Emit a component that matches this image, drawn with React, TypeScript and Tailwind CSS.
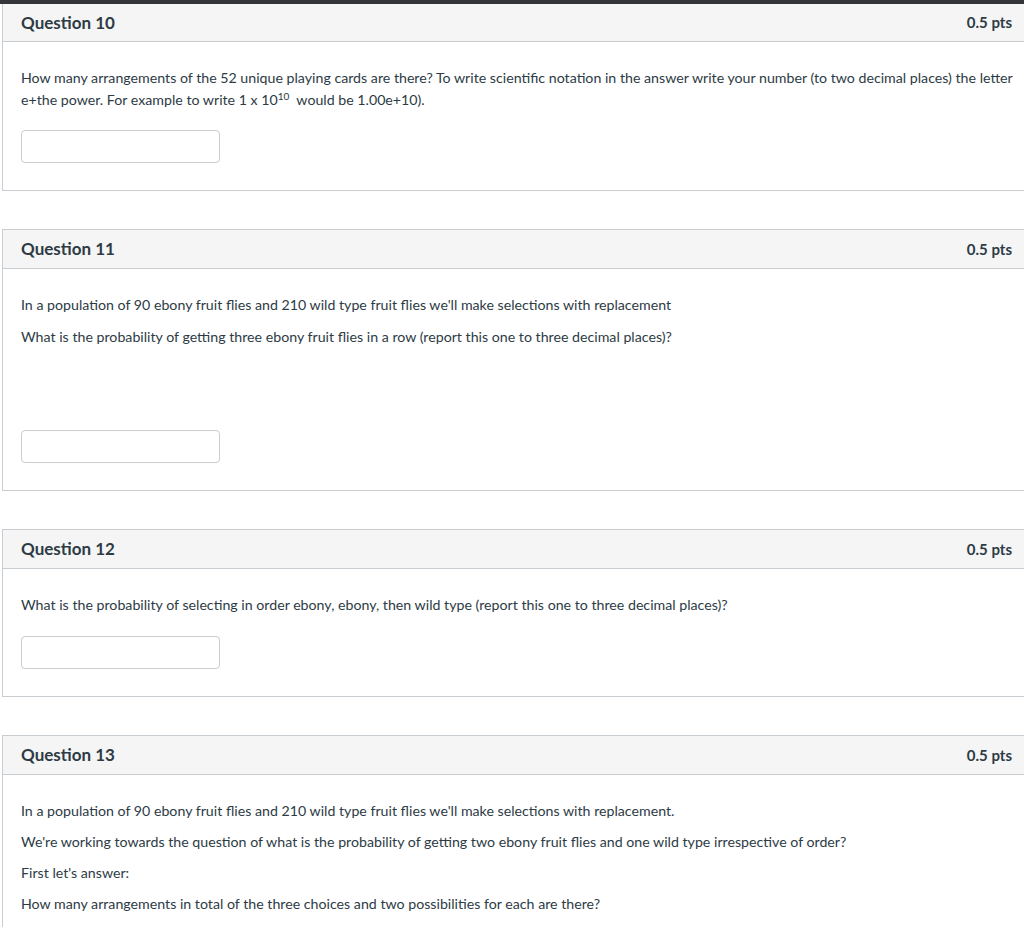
import React from "react";

const font = { fontFamily: "Lato, 'Open Sans', sans-serif" };

function AnswerBox() {
  return <div className="w-[199px] h-[33px] rounded-[4px] border border-[#c7cdd1] bg-white" />;
}

function QuestionCard({
  n,
  children,
  first,
  last,
}: {
  n: number;
  children: React.ReactNode;
  first?: boolean;
  last?: boolean;
}) {
  return (
    <div
      className={`ml-[2px] border-l border-b border-[#c7cdd1] bg-white ${first ? "" : "border-t"} ${
        last ? "" : "mb-[38px]"
      }`}
    >
      <div
        className={`${
          first ? "h-[38px]" : "h-[39px]"
        } flex items-center justify-between bg-[#f5f5f5] border-b border-[#c7cdd1] pl-[18px] pr-[12px]`}
      >
        <span className="text-[17px] font-bold text-[#2d3b45]">Question {n}</span>
        <span className="text-[15px] font-bold text-[#2d3b45]">0.5 pts</span>
      </div>
      <div className="pl-[18px] pr-[10px] pt-[25px] pb-[27px] text-[14.2px] leading-[22px] text-[#2d3b45]">
        {children}
      </div>
    </div>
  );
}

export default function App() {
  return (
    <div className="w-[1024px] h-[927px] overflow-hidden bg-white" style={font}>
      <div className="h-[4px] bg-[#333539]" />
      <QuestionCard n={10} first>
        <p>
          How many arrangements of the 52 unique playing cards are there? To write scientific notation in the answer write
          your number (to two decimal places) the letter e+the power. For example to write 1 x 10
          <sup className="text-[10px] leading-none">10</sup>&nbsp; would be 1.00e+10).
        </p>
        <div className="mt-[19px]">
          <AnswerBox />
        </div>
      </QuestionCard>
      <QuestionCard n={11}>
        <p>In a population of 90 ebony fruit flies and 210 wild type fruit flies we'll make selections with replacement</p>
        <p className="mt-[10px]">
          What is the probability of getting three ebony fruit flies in a row (report this one to three decimal places)?
        </p>
        <div className="mt-[82px]">
          <AnswerBox />
        </div>
      </QuestionCard>
      <QuestionCard n={12}>
        <p>What is the probability of selecting in order ebony, ebony, then wild type (report this one to three decimal places)?</p>
        <div className="mt-[20px]">
          <AnswerBox />
        </div>
      </QuestionCard>
      <QuestionCard n={13} last>
        <p>In a population of 90 ebony fruit flies and 210 wild type fruit flies we'll make selections with replacement.</p>
        <p className="mt-[9px]">
          We're working towards the question of what is the probability of getting two ebony fruit flies and one wild type
          irrespective of order?
        </p>
        <p className="mt-[9px]">First let's answer:</p>
        <p className="mt-[9px]">How many arrangements in total of the three choices and two possibilities for each are there?</p>
      </QuestionCard>
    </div>
  );
}
